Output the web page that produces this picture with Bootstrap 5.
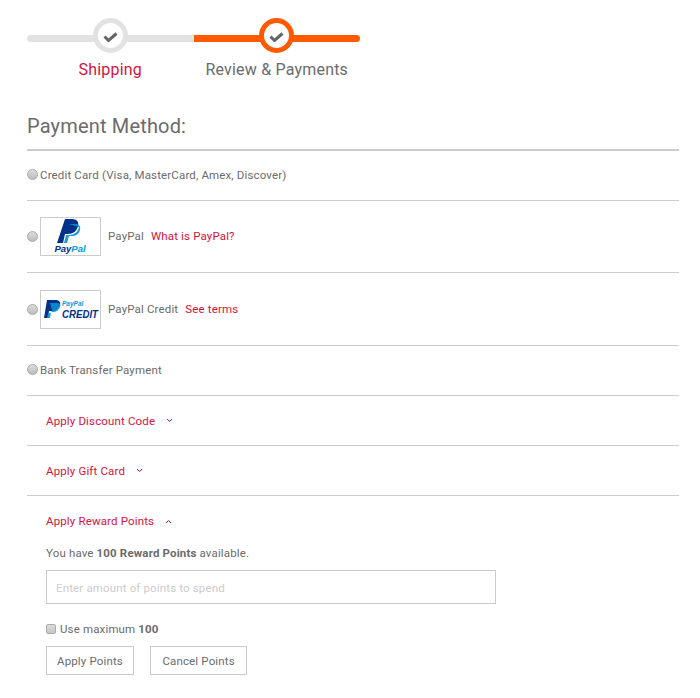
<!DOCTYPE html>
<html lang="en"><head><meta charset="utf-8"><title>Payment</title>
<link href="https://cdn.jsdelivr.net/npm/bootstrap@5.3.0/dist/css/bootstrap.min.css" rel="stylesheet">
<style>
html,body{background:#fff;}
body{font-family:Roboto,"Noto Sans",sans-serif;color:#6b6b6b;font-size:11.5px;line-height:16px;letter-spacing:.15px;overflow:hidden;}
.pg{padding:18px 21px 0 27px;height:698px;}
.stp{width:333px;height:35px;position:relative;}
.trk{position:absolute;left:0;right:0;top:17px;height:7px;display:flex;}
.trk i{flex:1;background:#e2e2e2;border-radius:4px 0 0 4px;}
.trk b{flex:1;background:#ff5a00;border-radius:0 4px 4px 0;}
.dots{position:relative;display:flex;}
.dots>div{flex:1;display:flex;justify-content:center;}
.cir{width:35px;height:35px;border-radius:50%;background:#fff;border:5px solid #e2e2e2;display:flex;align-items:center;justify-content:center;}
.cir.on{border-color:#ff5a00;}
.labs{width:333px;display:flex;font-size:16px;line-height:20px;margin-top:7px;letter-spacing:.2px;}
.labs div{flex:1;text-align:center;}
.crim{color:#d5123d;}
a.crim{text-decoration:none;}
.ttl{font-size:20px;line-height:26px;margin:33px 0 0;color:#6b6b6b;font-weight:400;padding-bottom:10px;border-bottom:2px solid #ccc;letter-spacing:.17px;}
.rw{border-bottom:1px solid #ccc;display:flex;align-items:center;white-space:pre;}
.h1r{height:50px;padding-bottom:2px;}.h2r{height:72px;padding-bottom:1px;}.h3r{height:73px;}
.rd{width:11px;height:11px;border-radius:50%;background:linear-gradient(#ddd,#bbb);border:1px solid #aaa;margin-right:2px;flex:none;}
.lg{width:61px;height:39px;border:1px solid #ccc;margin-right:7px;flex:none;display:block;}
.lg svg{display:block;}
.ext{margin-left:7px;}
.app{height:50px;padding-left:19px;}
.app svg{margin-left:11px;}
.rwd{padding-left:19px;}
.rwd .top{height:50px;display:flex;align-items:center;}
.rwd .top svg{margin-left:11px;}
.rwd p{margin:0 0 9px;margin-top:-1px;}
.inp{width:450px;height:34px;border:1px solid #ccc;border-radius:0;font-size:11.5px;letter-spacing:.15px;padding:2px 9px 0;color:#666;box-shadow:none;}
.inp::placeholder{color:#ccc;opacity:1;}
.chk{display:flex;align-items:center;margin-top:17px;white-space:pre;}
.bx{width:10px;height:10px;border:1px solid #aaa;border-radius:2px;background:linear-gradient(#ddd,#c4c4c4);margin-right:4px;}
.btns{display:flex;gap:16px;margin-top:9px;}
.bn{height:29px;border:1px solid #ccc;border-radius:0;background:#fff;color:#6b6b6b;font-size:11.5px;line-height:16px;letter-spacing:.15px;padding:0 10px;}
.bn:last-child{padding:0 11.5px;}
</style></head><body>
<div class="pg">
<div class="stp"><div class="trk"><i></i><b></b></div>
<div class="dots"><div><span class="cir"><svg width="15" height="12" viewBox="0 0 15 12"><path d="M1.5 6.5l4 4 8-7" fill="none" stroke="#666" stroke-width="3"/></svg></span></div><div><span class="cir on"><svg width="15" height="12" viewBox="0 0 15 12"><path d="M1.5 6.5l4 4 8-7" fill="none" stroke="#666" stroke-width="3"/></svg></span></div></div></div>
<div class="labs"><div class="crim">Shipping</div><div>Review &amp; Payments</div></div>
<h2 class="ttl">Payment Method:</h2>
<div class="rw h1r"><span class="rd"></span>Credit Card (Visa, MasterCard, Amex, Discover)</div>
<div class="rw h2r"><span class="rd"></span><span class="lg"><svg width="59" height="37" viewBox="0 0 59 37"><path d="M24 1h7c5 0 7 3 6 7-1 5-5 8-10 8h-3l-2 9h-6z" fill="#003087"/><path d="M28 6h6c4 0 6 2 5 6-1 4-4 6-8 6h-3l-2 7h-3l2-8h3c5 0 9-3 10-8z" fill="#0a8fd6" opacity=".9"/><text x="29" y="34" text-anchor="middle" font-size="9.5" font-weight="700" font-style="italic" font-family="Liberation Sans" fill="#003087" letter-spacing="0">Pay<tspan fill="#009cde">Pal</tspan></text></svg></span>PayPal<a class="crim ext" href="#">What is PayPal?</a></div>
<div class="rw h3r"><span class="rd"></span><span class="lg"><svg width="59" height="37" viewBox="0 0 59 37"><path d="M6 9h8c4 0 6 2 5 5-1 4-4 6-8 6H8l-1 7H3z" fill="#003087"/><path d="M9 12h7c3 0 4 1 3 4-1 3-4 5-7 5h-2l-1 6H6l1-5h3l1-3z" fill="#0a8fd6" opacity=".9"/><text x="21" y="15" font-size="6.5" font-weight="700" font-style="italic" font-family="Liberation Sans" fill="#009cde" letter-spacing="0">PayPal</text><text transform="translate(21 27) scale(.88 1)" font-size="11" font-weight="700" font-style="italic" font-family="Liberation Sans" fill="#003087" letter-spacing="0">CREDIT</text></svg></span>PayPal Credit<a class="crim ext" href="#">See terms</a></div>
<div class="rw h1r"><span class="rd"></span>Bank Transfer Payment</div>
<div class="rw app"><a class="crim" href="#">Apply Discount Code</a><svg width="7" height="5" viewBox="0 0 7 5"><path d="M1 1l2.5 2.5L6 1" fill="none" stroke="#d5123d" stroke-width="1"/></svg></div>
<div class="rw app"><a class="crim" href="#">Apply Gift Card</a><svg width="7" height="5" viewBox="0 0 7 5"><path d="M1 1l2.5 2.5L6 1" fill="none" stroke="#d5123d" stroke-width="1"/></svg></div>
<div class="rwd">
<div class="top"><a class="crim" href="#">Apply Reward Points</a><svg width="7" height="5" viewBox="0 0 7 5"><path d="M1 4l2.5-2.5L6 4" fill="none" stroke="#d5123d" stroke-width="1"/></svg></div>
<p>You have <b>100 Reward Points</b> available.</p>
<input class="form-control inp" placeholder="Enter amount of points to spend">
<div class="chk"><span class="bx"></span>Use maximum <b>100</b></div>
<div class="btns"><button class="btn bn">Apply Points</button><button class="btn bn">Cancel Points</button></div>
</div>
</div>
</body></html>
